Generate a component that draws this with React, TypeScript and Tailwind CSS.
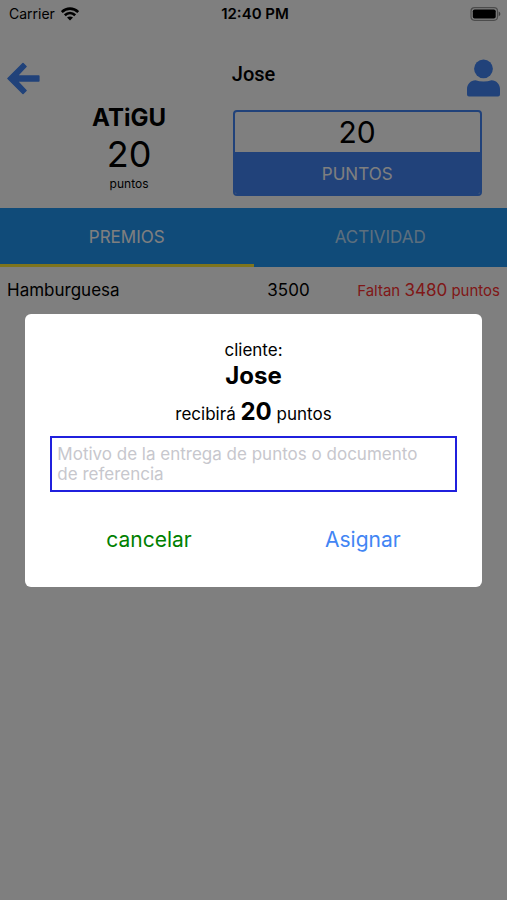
import React, { useState } from 'react';

const tabs = ['PREMIOS', 'ACTIVIDAD'];

const rewards = [{ name: 'Hamburguesa', cost: 3500, missing: 3480 }];

const WifiIcon = () => (
    <svg width="18" height="14" viewBox="0 0 18 14" fill="none" stroke="#000" strokeWidth="2.6" aria-hidden="true">
        <path d="M.8 5C5.500 .5 12.500 .5 17.200 5" />
        <path d="M3.800 8.300C6.900 5.300 11.100 5.300 14.200 8.300" />
        <path d="M9 13.500L6 10.500C7.700 9 10.300 9 12 10.500Z" fill="#000" stroke="none" />
    </svg>
);

const BatteryIcon = () => (
    <svg width="31" height="14" viewBox="0 0 31 14" fill="none" aria-hidden="true">
        <rect x="1" y=".7" width="26.500" height="12.600" rx="3.500" stroke="#000" strokeOpacity=".4" strokeWidth="1.200" />
        <rect x="2.800" y="2.500" width="22.900" height="9" rx="1.800" fill="#000" />
        <path d="M28.700 4.600C30.900 5.500 30.900 8.500 28.700 9.400Z" fill="#000" fillOpacity=".5" />
    </svg>
);

const BackIcon = () => (
    <svg width="33" height="33" viewBox="0 0 33 33" fill="#4285f4" stroke="#4285f4" strokeWidth="1.600" strokeLinejoin="round" aria-hidden="true">
        <path d="M1 16.500L16 1.500L19 4.500L9.800 14.100H31.800V18.900H9.800L19 28.500L16 31.500Z" />
    </svg>
);

const PersonIcon = () => (
    <svg width="33" height="38" viewBox="0 0 33 38" fill="#4285f4" aria-hidden="true">
        <circle cx="16.500" cy="9.800" r="9.400" />
        <path d="M8.500 21.300C13.500 23 19.500 23 24.500 21.300C29.500 21.300 33 25.500 33 30V35.500Q33 37.500 31 37.500H2Q0 37.500 0 35.500V30C0 25.500 3.500 21.300 8.500 21.300Z" />
    </svg>
);

const App: React.FC = () => {
    const [activeTab, setActiveTab] = useState('PREMIOS');
    const [points, setPoints] = useState('20');
    const [reason, setReason] = useState('');
    const [open, setOpen] = useState(true);

    return (
        <div className="min-h-screen bg-white text-black font-['Inter','Liberation_Sans',sans-serif]">
            {/* Status bar */}
            <div className="grid grid-cols-3 items-center h-7 pl-[9px] pr-1.5 text-sm">
                <div className="flex items-center gap-1.5">
                    Carrier
                    <WifiIcon />
                </div>
                <span className="text-center text-[15px] font-semibold">12:40 PM</span>
                <div className="flex justify-end"><BatteryIcon /></div>
            </div>

            {/* Header */}
            <header className="flex items-center justify-between mt-[26px] h-12 px-[7px]">
                <button type="button" aria-label="Volver"><BackIcon /></button>
                <h1 className="pb-2 text-xl font-medium font-['Roboto','Inter',sans-serif]">Jose</h1>
                <button type="button" aria-label="Perfil"><PersonIcon /></button>
            </header>

            {/* Balance and points form */}
            <section className="grid grid-cols-[5fr_6fr] mx-[5%] pt-1 pb-3">
                <div className="flex flex-col items-center">
                    <h2 className="text-2xl leading-6 font-bold">ATiGU</h2>
                    <p className="text-4xl leading-12">20</p>
                    <p className="text-xs leading-3">puntos</p>
                </div>
                <div className="mt-1 border-2 border-[#4285f4] rounded-sm overflow-hidden">
                    <input
                        aria-label="Puntos a asignar"
                        className="block w-full h-10 text-center text-3xl outline-none"
                        value={points}
                        onChange={e => setPoints(e.target.value)}
                    />
                    <button type="button" onClick={() => setOpen(true)} className="w-full h-[42px] pt-1 bg-[#4285f4] text-white text-[17px]">PUNTOS</button>
                </div>
            </section>

            {/* Tabs */}
            <nav className="grid grid-cols-2 bg-[#2196f3]">
                {tabs.map(tab => (
                    <button
                        key={tab}
                        type="button"
                        onClick={() => setActiveTab(tab)}
                        className={`h-[59px] pt-1 border-b-3 text-[17px] ${activeTab === tab ? 'border-[#ffeb3b] text-white' : 'border-transparent text-white/70'}`}
                    >
                        {tab}
                    </button>
                ))}
            </nav>

            <ul>
                {rewards.map(r => (
                    <li key={r.name} className="grid grid-cols-[1fr_auto_1fr] items-baseline px-[7px] py-[11px] text-[17px] leading-6">
                        <span>{r.name}</span>
                        <span className="pl-[70px]">{r.cost}</span>
                        <span className="text-right text-[15px] text-[#ff3030]">Faltan <span className="text-[17px]">{r.missing}</span> puntos</span>
                    </li>
                ))}
            </ul>

            {/* Confirm dialog */}
            {open && (
                <div className="fixed inset-0 flex items-center justify-center bg-black/50">
                    <div role="dialog" aria-modal="true" aria-label="Asignar puntos" className="w-[90%] px-[25px] pt-6 pb-[31px] bg-white rounded-md text-center">
                        <p className="text-[17px] leading-6">cliente:</p>
                        <p className="text-2xl leading-7 font-bold">Jose</p>
                        <p className="pt-1.5 pb-1.5 text-[17px] leading-8">recibirá <b className="text-2xl">20</b> puntos</p>
                        <textarea
                            aria-label="Motivo"
                            rows={2}
                            className="block w-full pl-[5px] pr-8 py-1.5 border-2 border-[#2020dd] text-[17px] leading-5 resize-none outline-none placeholder:text-[#c7c7cd]"
                            placeholder="Motivo de la entrega de puntos o documento de referencia"
                            value={reason}
                            onChange={e => setReason(e.target.value)}
                        />
                        <div className="flex justify-between px-14 pt-8 text-[21px] leading-8">
                            <button type="button" onClick={() => setOpen(false)} className="text-[green]">cancelar</button>
                            <button type="button" onClick={() => setOpen(false)} className="text-[#4285f4]">Asignar</button>
                        </div>
                    </div>
                </div>
            )}
        </div>
    );
};

export default App;
